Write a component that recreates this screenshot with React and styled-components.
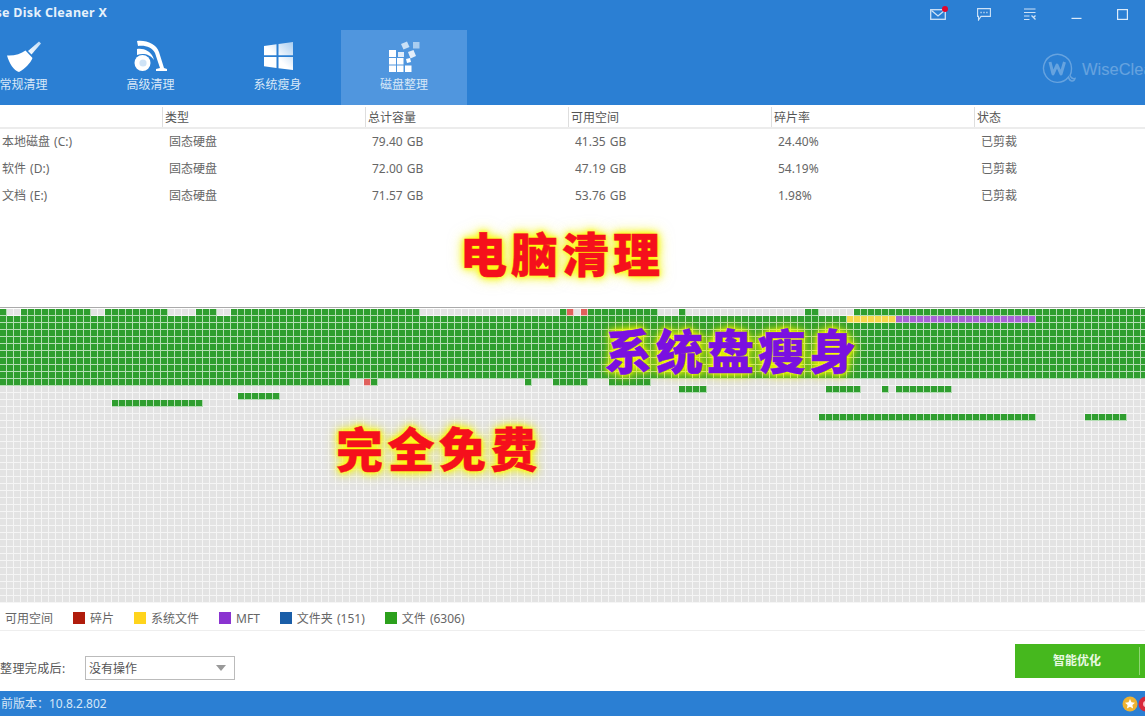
import React from 'react';
import styled, { createGlobalStyle } from 'styled-components';

const FONT = `'Noto Sans', 'Noto Sans CJK SC', sans-serif`;

const GlobalStyle = createGlobalStyle`
  html, body { margin: 0; padding: 0; background: #fff; overflow: hidden; }
  * { box-sizing: border-box; }
`;

const Page = styled.div`
  position: relative;
  display: flex;
  flex-direction: column;
  width: 1145px;
  height: 716px;
  overflow: hidden;
  font-family: ${FONT};
  font-size: 12px;
  word-spacing: 1px;
  color: #555;
  background: #fff;
`;

const Header = styled.header`
  height: 105px;
  flex: none;
  background: #2b7fd3;
  color: #fff;
`;

const TitleBar = styled.div`
  display: flex;
  height: 30px;
`;

const AppTitle = styled.div`
  margin-left: -21px;
  padding-top: 4px;
  font-weight: 700;
  font-size: 12.5px;
  line-height: 18px;
  letter-spacing: 0.3px;
  word-spacing: 0;
  color: #e6f1fb;
`;

const Controls = styled.div`
  display: flex;
  margin-left: auto;
`;

const Control = styled.div`
  position: relative;
  display: flex;
  align-items: center;
  justify-content: center;
  width: 46px;
  height: 28px;
`;

const Badge = styled.span`
  position: absolute;
  top: 6px;
  right: 13px;
  width: 6px;
  height: 6px;
  border-radius: 50%;
  background: #e3062a;
`;

const TabRow = styled.div`
  display: flex;
  justify-content: space-between;
  height: 75px;
  margin-left: -40px;
`;

const Tabs = styled.nav`
  display: flex;
`;

const Tab = styled.div`
  display: flex;
  flex-direction: column;
  align-items: center;
  width: ${p => (p.$active ? '126px' : '127px')};
  padding-top: 10px;
  background: ${p => (p.$active ? '#5096de' : 'transparent')};
`;

const TabIcon = styled.svg`
  display: block;
  width: 36px;
  height: 32px;
`;

const TabLabel = styled.span`
  margin-top: 4px;
  font-size: 12px;
  line-height: 17px;
  color: #d8e8f8;
`;

const Watermark = styled.div`
  display: flex;
  align-items: center;
  width: 103px;
  height: 40px;
  margin-top: 19px;
  overflow: hidden;
  opacity: 0.28;
`;

const WatermarkName = styled.span`
  margin-left: 6px;
  font-family: 'Liberation Sans', sans-serif;
  font-size: 16.5px;
  color: #fff;
  white-space: nowrap;
`;

const LogoSvg = styled.svg`
  flex: none;
`;

const Table = styled.div`
  flex: none;
  height: 202px;
`;

const Row = styled.div`
  display: grid;
  grid-template-columns: 162px 203px 203px 203px 203px 171px;
  height: ${p => (p.$head ? '24px' : '27px')};
  align-items: center;
  ${p => p.$head && 'border-bottom: 2px solid #ececec; padding-top: 1px;'}
`;

const HeadCell = styled.div`
  height: 20px;
  line-height: 22px;
  padding-left: 2px;
  color: #555;
  ${p => !p.$first && 'border-left: 1px solid #dedede;'}
`;

const Cell = styled.div`
  padding-left: ${p => (p.$first ? '2px' : '7px')};
  padding-bottom: 2px;
  line-height: 16px;
  color: #666;
  white-space: nowrap;
`;

const MapFrame = styled.div`
  flex: none;
  height: 297px;
  padding-top: 1px;
  border-top: 1px solid #aaa;
  overflow: hidden;
`;

const BlockGrid = styled.div`
  display: grid;
  grid-template-columns: repeat(164, 7px);
  grid-auto-rows: 7px;
  width: 1148px;
`;

const BLOCK_COLORS = {
  free: ['#e3e3e3', '#f5f5f5'],
  file: ['#2f9e2f', '#b4deb4'],
  frag: ['#e0605c', '#f3c9c6'],
  sys: ['#f6d84a', '#fbefb0'],
  mft: ['#a863d6', '#dcc2ee'],
};

const Block = styled.div`
  background: ${p => BLOCK_COLORS[p.$kind][0]};
  border-right: 1px solid ${p => BLOCK_COLORS[p.$kind][1]};
  border-bottom: 1px solid ${p => BLOCK_COLORS[p.$kind][1]};
`;

const Legend = styled.div`
  display: flex;
  align-items: center;
  flex: none;
  height: 27px;
  padding: 2px 0 0 5px;
  border-bottom: 1px solid #eee;
  color: #666;
`;

const LegendItem = styled.div`
  display: flex;
  align-items: center;
  margin-right: 20px;
  white-space: nowrap;
`;

const Swatch = styled.span`
  width: 12px;
  height: 12px;
  margin-right: 5px;
  background: ${p => p.$color};
`;

const ActionBar = styled.div`
  display: flex;
  flex: 1;
  align-items: flex-start;
  justify-content: space-between;
`;

const AfterDone = styled.div`
  display: flex;
  align-items: center;
  margin-top: 25px;
`;

const AfterLabel = styled.span`
  width: 85px;
  letter-spacing: 0.4px;
  color: #555;
`;

const Select = styled.div`
  display: flex;
  align-items: center;
  justify-content: space-between;
  width: 150px;
  height: 24px;
  padding: 0 8px 0 3px;
  border: 1px solid #bbb;
  color: #555;
`;

const Caret = styled.span`
  width: 0;
  height: 0;
  border-left: 5.5px solid transparent;
  border-right: 5.5px solid transparent;
  border-top: 6px solid #999;
`;

const OptimizeButton = styled.div`
  display: flex;
  width: 130px;
  height: 34px;
  margin-top: 13px;
  background: #46b81e;
  color: #e9f8e2;
  font-weight: 700;
`;

const ButtonLabel = styled.span`
  width: 125px;
  height: 28px;
  margin-top: 3px;
  line-height: 27px;
  text-align: center;
  border-right: 1px solid #8fd672;
`;

const StatusBar = styled.footer`
  display: flex;
  align-items: center;
  justify-content: space-between;
  flex: none;
  height: 25px;
  background: #2b7fd3;
  color: #d4e6f7;
`;

const Version = styled.span`
  margin-left: -11px;
  padding-bottom: 1px;
`;

const StatusIcons = styled.div`
  display: flex;
  margin-right: -9px;
`;

const Promo = styled.div`
  position: absolute;
  left: ${p => p.$x}px;
  top: ${p => p.$y}px;
  font-family: 'Noto Sans CJK SC', sans-serif;
  font-weight: 900;
  font-size: 47px;
  line-height: 52px;
  letter-spacing: ${p => p.$spacing}px;
  white-space: nowrap;
  color: ${p => p.$color};
  -webkit-text-stroke: 0.5px ${p => p.$color};
  text-shadow: 0 0 3px rgba(255, 255, 0, 0.9), 0 0 6px rgba(255, 255, 0, 0.8),
    0 0 9px rgba(250, 250, 0, 0.75), 0 0 12px rgba(244, 244, 0, 0.6),
    0 0 16px rgba(240, 240, 0, 0.5);
`;

// free-space map: [row, first col, last col, kind], everything else is free
const RUNS = [
  [0, 0, 0, 'file'], [0, 3, 12, 'file'], [0, 15, 23, 'file'], [0, 28, 30, 'file'],
  [0, 33, 59, 'file'], [0, 80, 80, 'file'], [0, 81, 81, 'frag'], [0, 83, 83, 'frag'],
  [0, 84, 93, 'file'], [0, 97, 97, 'file'], [0, 115, 116, 'file'], [0, 122, 163, 'file'],
  [1, 0, 120, 'file'], [1, 121, 127, 'sys'], [1, 128, 147, 'mft'], [1, 148, 163, 'file'],
  [2, 0, 163, 'file'], [3, 0, 163, 'file'], [4, 0, 163, 'file'], [5, 0, 163, 'file'],
  [6, 0, 163, 'file'], [7, 0, 163, 'file'], [8, 0, 163, 'file'], [9, 0, 163, 'file'],
  [10, 0, 49, 'file'], [10, 52, 52, 'frag'], [10, 53, 53, 'file'], [10, 75, 75, 'file'],
  [10, 79, 83, 'file'], [10, 87, 92, 'file'],
  [11, 97, 100, 'file'], [11, 118, 122, 'file'], [11, 126, 126, 'file'], [11, 128, 135, 'file'],
  [12, 34, 39, 'file'],
  [13, 16, 28, 'file'],
  [15, 117, 147, 'file'], [15, 155, 160, 'file'],
];

const kindAt = (r, c) => {
  const run = RUNS.find(x => x[0] === r && c >= x[1] && c <= x[2]);
  return run ? run[3] : 'free';
};

const BLOCKS = [];
for (let r = 0; r < 42; r++) {
  for (let c = 0; c < 164; c++) BLOCKS.push({ id: `${r}-${c}`, kind: kindAt(r, c) });
}

const COLUMNS = ['', '类型', '总计容量', '可用空间', '碎片率', '状态'];
const DISKS = [
  ['本地磁盘 (C:)', '固态硬盘', '79.40 GB', '41.35 GB', '24.40%', '已剪裁'],
  ['软件 (D:)', '固态硬盘', '72.00 GB', '47.19 GB', '54.19%', '已剪裁'],
  ['文档 (E:)', '固态硬盘', '71.57 GB', '53.76 GB', '1.98%', '已剪裁'],
];
const LEGEND = [
  ['碎片', '#b01c0c'],
  ['系统文件', '#ffd41c'],
  ['MFT', '#8a33d0'],
  ['文件夹 (151)', '#1a5ea8'],
  ['文件 (6306)', '#2ca01c'],
];

const BroomIcon = () => (
  <TabIcon viewBox="0 0 36 32">
    <defs>
      <linearGradient id="broomFade" x1="0" y1="1" x2="1" y2="0">
        <stop offset="0" stopColor="#fff" />
        <stop offset="1" stopColor="#bcd9f4" />
      </linearGradient>
    </defs>
    <path d="M22 11 L33 1.5 L35 3.5 L25.5 14.5 Z" fill="url(#broomFade)" />
    <path d="M1 15.5 C8 16 15 14 19.5 10.5 L26.5 18 C24.5 23 19 29 13 32 C8 31 3 23 1 15.5 Z" fill="#fff" />
  </TabIcon>
);

const VacuumIcon = () => (
  <TabIcon viewBox="0 0 36 32">
    <path d="M4 1 C14 0 23 4 26 12 L31 28 L34 29 L34 31 L23 31 L23 29 L27 28 L22 13 C19 7 12 5 5 6 Z" fill="#fff" />
    <path d="M4 9 C11 8 17 11 20 17 L21 20 C17 14 10 13 4 15 Z" fill="#fff" />
    <circle cx="9.5" cy="23" r="8" fill="#fff" />
    <circle cx="10" cy="23" r="3.6" fill="#cfe3f6" />
  </TabIcon>
);

const WindowsIcon = () => (
  <TabIcon viewBox="0 0 36 32">
    <defs>
      <linearGradient id="winFade" x1="0" y1="1" x2="1" y2="0">
        <stop offset="0.45" stopColor="#fff" />
        <stop offset="1" stopColor="#a9cdf0" />
      </linearGradient>
    </defs>
    <path
      d="M4 6 L16.5 4.3 L16.5 15.2 L4 15.2 Z M18.5 4 L33 2 L33 15.2 L18.5 15.2 Z M4 17 L16.5 17 L16.5 28 L4 26.3 Z M18.5 17 L33 17 L33 30 L18.5 28.2 Z"
      fill="url(#winFade)"
    />
  </TabIcon>
);

const DefragIcon = () => (
  <TabIcon viewBox="0 0 36 32">
    <path
      d="M3 10 H10 V17 H3 Z M3 18 H10 V24.5 H3 Z M11 18 H17.5 V24.5 H11 Z M3 25.5 H10 V32 H3 Z M11 25.5 H17.5 V32 H11 Z M19 25.5 H25.5 V32 H19 Z"
      fill="#fff"
    />
    <path d="M12 12 H18 V17 H12 Z" fill="#e3eefa" />
    <path d="M15 4 L21 1.5 L23.5 7 L17.5 9.5 Z" fill="#c9e0f6" />
    <path d="M27 2 H33.5 V8.5 H27 Z" fill="#a9cdf0" />
    <path d="M22 12 L27.5 10 L30 16 L24.5 18.5 Z" fill="#e3eefa" />
    <path d="M20 19 L24 18 L25 22 L21 23 Z" fill="#fff" />
  </TabIcon>
);

const MailIcon = () => (
  <svg width="16" height="11" viewBox="0 0 16 11" fill="none" stroke="#cfe3f7" strokeWidth="1.3">
    <rect x="0.7" y="0.7" width="14.6" height="9.6" />
    <path d="M1.5 1.5 L8 7 L14.5 1.5" />
  </svg>
);

const ChatIcon = () => (
  <svg width="14" height="13" viewBox="0 0 14 13" fill="none" stroke="#cfe3f7" strokeWidth="1.1">
    <path d="M0.6 0.6 H13.4 V8.4 H4 L1.5 12 V8.4 H0.6 Z" />
    <path d="M3.5 4.5 H4.7 M6.4 4.5 H7.6 M9.3 4.5 H10.5" strokeWidth="1.4" />
  </svg>
);

const MenuIcon = () => (
  <svg width="14" height="12" viewBox="0 0 14 12" fill="none" stroke="#cfe3f7" strokeWidth="1">
    <path d="M1 1 H12.5 M1 4.5 H12.5 M1 8 H6.5 M1 11.5 H6.5" />
    <path d="M8.5 7.5 L12.5 11.5 M12.5 7.5 L10.5 9.5" strokeWidth="1.3" />
  </svg>
);

const MinimizeIcon = () => (
  <svg width="11" height="10" viewBox="0 0 11 10" stroke="#dcebfa" strokeWidth="1.2">
    <path d="M0.5 9.4 H10.5" />
  </svg>
);

const MaximizeIcon = () => (
  <svg width="11" height="11" viewBox="0 0 11 11" fill="none" stroke="#dcebfa" strokeWidth="1.2">
    <rect x="0.6" y="0.6" width="9.8" height="9.8" />
  </svg>
);

const WiseLogo = () => (
  <LogoSvg width="34" height="32" viewBox="0 0 34 32" fill="none">
    <path
      d="M26.5 24 A14 14 0 1 1 29.5 15 C29.6 18 29 20.5 28 22.5 C29 25 31 26 33 25.5 C32 29 27.5 29 26.5 24 Z"
      stroke="#fff"
      strokeWidth="1.4"
    />
    <path d="M8 9 L11 21 L15 12 L19 21 L22.5 9" stroke="#fff" strokeWidth="3" strokeLinejoin="round" />
  </LogoSvg>
);

const StarBadge = () => (
  <svg width="16" height="16" viewBox="0 0 16 16">
    <circle cx="8" cy="8" r="7.5" fill="#eeb230" />
    <path d="M8 3 L9.5 6.3 L13 6.7 L10.4 9 L11.1 12.5 L8 10.7 L4.9 12.5 L5.6 9 L3 6.7 L6.5 6.3 Z" fill="#fff" />
  </svg>
);

const RedBadge = () => (
  <svg width="16" height="16" viewBox="0 0 16 16">
    <circle cx="8" cy="8" r="7.5" fill="#d8283a" />
    <circle cx="8" cy="8" r="3" fill="#f7c6cb" />
  </svg>
);

const App = () => (
  <Page>
    <GlobalStyle />
    <Header>
      <TitleBar>
        <AppTitle>Wise Disk Cleaner X</AppTitle>
        <Controls>
          <Control>
            <MailIcon />
            <Badge />
          </Control>
          <Control>
            <ChatIcon />
          </Control>
          <Control>
            <MenuIcon />
          </Control>
          <Control>
            <MinimizeIcon />
          </Control>
          <Control>
            <MaximizeIcon />
          </Control>
        </Controls>
      </TitleBar>
      <TabRow>
        <Tabs>
          <Tab>
            <BroomIcon />
            <TabLabel>常规清理</TabLabel>
          </Tab>
          <Tab>
            <VacuumIcon />
            <TabLabel>高级清理</TabLabel>
          </Tab>
          <Tab>
            <WindowsIcon />
            <TabLabel>系统瘦身</TabLabel>
          </Tab>
          <Tab $active>
            <DefragIcon />
            <TabLabel>磁盘整理</TabLabel>
          </Tab>
        </Tabs>
        <Watermark>
          <WiseLogo />
          <WatermarkName>WiseCleaner</WatermarkName>
        </Watermark>
      </TabRow>
    </Header>

    <Table>
      <Row $head>
        {COLUMNS.map((name, i) => (
          <HeadCell key={name || 'name'} $first={i === 0}>
            {name}
          </HeadCell>
        ))}
      </Row>
      {DISKS.map(disk => (
        <Row key={disk[0]}>
          {disk.map((value, i) => (
            <Cell key={i} $first={i === 0}>
              {value}
            </Cell>
          ))}
        </Row>
      ))}
    </Table>

    <MapFrame>
      <BlockGrid>
        {BLOCKS.map(b => (
          <Block key={b.id} $kind={b.kind} />
        ))}
      </BlockGrid>
    </MapFrame>

    <Legend>
      <LegendItem>可用空间</LegendItem>
      {LEGEND.map(([label, color]) => (
        <LegendItem key={label}>
          <Swatch $color={color} />
          {label}
        </LegendItem>
      ))}
    </Legend>

    <ActionBar>
      <AfterDone>
        <AfterLabel>整理完成后:</AfterLabel>
        <Select>
          没有操作
          <Caret />
        </Select>
      </AfterDone>
      <OptimizeButton>
        <ButtonLabel>智能优化</ButtonLabel>
      </OptimizeButton>
    </ActionBar>

    <StatusBar>
      <Version>当前版本：10.8.2.802</Version>
      <StatusIcons>
        <StarBadge />
        <RedBadge />
      </StatusIcons>
    </StatusBar>

    <Promo $x={460} $y={226} $color="#f5101c" $spacing={4}>电脑清理</Promo>
    <Promo $x={605} $y={323} $color="#7a10e0" $spacing={4}>系统盘瘦身</Promo>
    <Promo $x={336} $y={421} $color="#f5101c" $spacing={4.5}>完全免费</Promo>
  </Page>
);

export default App;
